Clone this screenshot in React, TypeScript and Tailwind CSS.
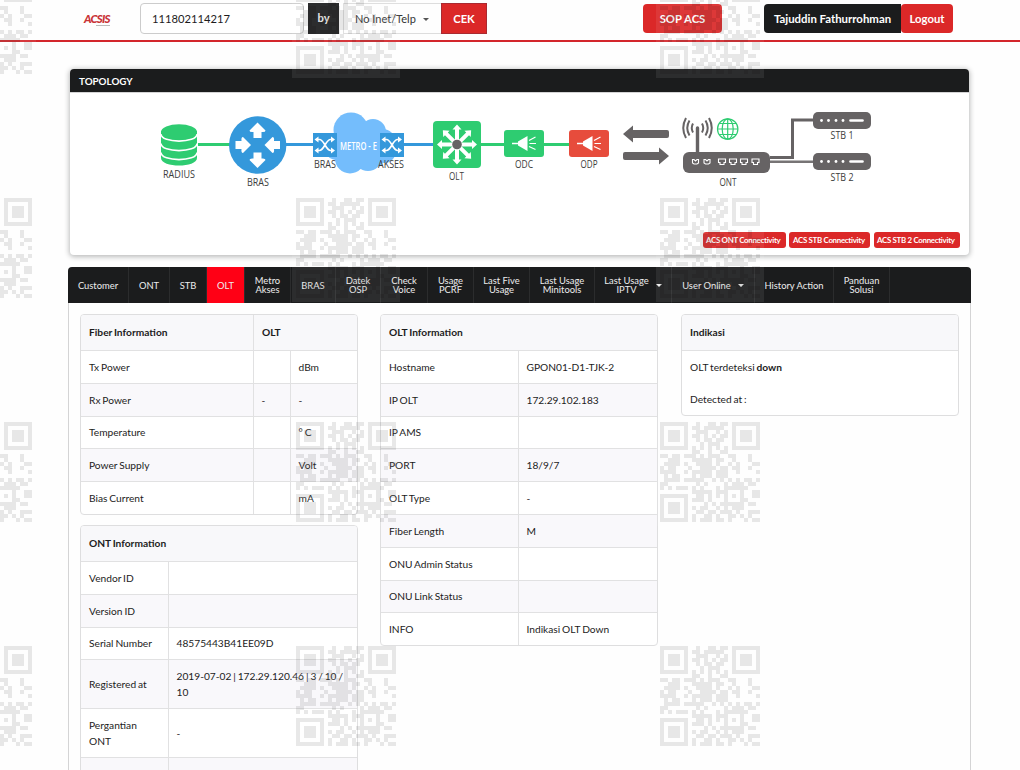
import type { ReactNode } from 'react'

const qrRows = [
  '#######..#..##.##.#######',
  '#.....#.##.#####..#.....#',
  '#.###.#..###..#.#.#.###.#',
  '#.###.#.##.#.#.##.#.###.#',
  '#.###.#..#.##.##..#.###.#',
  '#.....#...#.###...#.....#',
  '#######.#.#.#.#.#.#######',
  '........##..#..##........',
  '##.##.###.#.###..##...#..',
  '..###...#####.##..#...#..',
  '.####.#..####.#..#.#...##',
  '#.##...#..####.##.##..#..',
  '####..#.#####.###..#....#',
  '.#.##...#.###.###........',
  '.####.#####..#.#.#.#.##.#',
  '##.......#.#....#.###.##.',
  '#.#.###.#.#...#.######...',
  '........#####.###...#..##',
  '#######..##.#.#.#.#.#..##',
  '#.....#.###.#...#...##...',
  '#.###.#....#.#.######.##.',
  '#.###.#.#.##..#.#.###....',
  '#.###.#..##.##.###.#..###',
  '#.....#.#..##.#..##.#.#..',
  '#######.#.###.##.#...#.##',
]

const navItems = [
  { label: 'Customer', width: 'w-[61px]' },
  { label: 'ONT', width: 'w-[41px]' },
  { label: 'STB', width: 'w-[37px]' },
  { label: 'OLT', width: 'w-[38px]', active: true },
  { label: 'Metro\nAkses', width: 'w-[46px]' },
  { label: 'BRAS', width: 'w-[45px]' },
  { label: 'Datek\nOSP', width: 'w-[45px]' },
  { label: 'Check\nVoice', width: 'w-[47px]' },
  { label: 'Usage\nPCRF', width: 'w-[46px]' },
  { label: 'Last Five\nUsage', width: 'w-[56px]' },
  { label: 'Last Usage\nMinitools', width: 'w-[65px]' },
  { label: 'Last Usage\nIPTV', width: 'w-[77px]', caret: true },
  { label: 'User Online', width: 'w-[83px]', caret: true },
  { label: 'History Action', width: 'w-[79px]' },
  { label: 'Panduan\nSolusi', width: 'w-[56px]' },
]

const fiberRows = [
  ['Tx Power', '', 'dBm'],
  ['Rx Power', '-', '-'],
  ['Temperature', '', '° C'],
  ['Power Supply', '', 'Volt'],
  ['Bias Current', '', 'mA'],
]

const oltRows = [
  ['Hostname', 'GPON01-D1-TJK-2'],
  ['IP OLT', '172.29.102.183'],
  ['IP AMS', ''],
  ['PORT', '18/9/7'],
  ['OLT Type', '-'],
  ['Fiber Length', 'M'],
  ['ONU Admin Status', ''],
  ['ONU Link Status', ''],
  ['INFO', 'Indikasi OLT Down'],
]

const ontRows = [
  ['Vendor ID', ''],
  ['Version ID', ''],
  ['Serial Number', '48575443B41EE09D'],
  ['Registered at', '2019-07-02 | 172.29.120.46 | 3 / 10 / 10'],
  ['Pergantian ONT', '-'],
  ['', ''],
]

function Watermark() {
  return (
    <svg className="pointer-events-none absolute inset-0" width="1020" height="770" shapeRendering="crispEdges">
      <defs>
        <g id="qr">
          <rect x="-4" y="-4" width="108" height="108" fill="#fff" opacity="0.08" />
          {qrRows.map((row, y) =>
            row.split('').map((c, x) =>
              c === '#' ? <rect key={`${x}-${y}`} x={x * 4} y={y * 4} width="4" height="4" fill="#000" fillOpacity="0.09" /> : null
            )
          )}
        </g>
      </defs>
      {[-26, 198, 422, 646].map((y) =>
        [-68, 296, 660].map((x) => <use key={`${x}-${y}`} href="#qr" x={x} y={y} />)
      )}
    </svg>
  )
}

function Caret({ className = '' }: { className?: string }) {
  return <span className={`h-0 w-0 border-x-[3px] border-t-[3px] border-x-transparent border-t-current ${className}`} />
}

function Label({ x, y, w, children }: { x: number; y: number; w: number; children: string }) {
  return (
    <text x={x - w / 2} y={y} textLength={w} lengthAdjust="spacingAndGlyphs" fontSize="10.500" fill="#3c3c3c">
      {children}
    </text>
  )
}

function Shuffle({ x }: { x: number }) {
  return (
    <g transform={`translate(${x} 133)`}>
      <rect width="24" height="24" fill="#3498db" />
      <path d="M3 6.500h3.500C11 6.500 13 17.500 17.500 17.500h2M3 17.500h3.500C11 17.500 13 6.500 17.500 6.500h2" stroke="#fff" strokeWidth="1.700" fill="none" />
      <path d="M18 3.500l4 3-4 3zM18 14.500l4 3-4 3zM5.500 3.500l-4 3 4 3zM5.500 14.500l-4 3 4 3z" fill="#fff" />
    </g>
  )
}

function Splitter({ x, color }: { x: number; color: string }) {
  return (
    <g transform={`translate(${x} 130)`}>
      <rect width="40" height="27" rx="3" fill={color} />
      <path d="M8 13.500h7" stroke="#fff" strokeWidth="1.500" />
      <path d="M14 11.500L23.500 6v15L14 15.500z" fill="#fff" />
      <path d="M25 10.500l6.500-3.500M25.500 13.500H32M25 16.500l6.500 3" stroke="#fff" strokeWidth="1.200" />
    </g>
  )
}

function SetTopBox({ y }: { y: number }) {
  return (
    <g transform={`translate(813 ${y})`}>
      <rect width="58" height="17" rx="5" fill="#666364" />
      {[8.5, 15.5, 23, 30].map((x) => (
        <circle key={x} cx={x} cy="8.500" r="1.400" fill="#fff" />
      ))}
      <path d="M37.500 8.500h12" stroke="#fff" strokeWidth="2.600" strokeLinecap="round" />
    </g>
  )
}

const bigArrows = [
  'translate(257.5 122.5)',
  'translate(257.5 168) rotate(180)',
  'translate(251 145) rotate(90)',
  'translate(264.5 145) rotate(-90)',
]

function TopologyDiagram() {
  return (
    <svg className="block" width="899" height="138" viewBox="70 93 899 138" fontFamily="'Open Sans', sans-serif">
      <path d="M198 144.500h32M480 144.500h90" stroke="#2ecc71" strokeWidth="3" />
      <path d="M285 144.500h150" stroke="#3498db" strokeWidth="3" />

      {/* Radius database */}
      <path d="M161 131v27c0 10 36 10 36 0v-27z" fill="#2ecc71" />
      <path d="M161 134c0 9.500 36 9.500 36 0M161 143.500c0 9.500 36 9.500 36 0M161 152.500c0 9.500 36 9.500 36 0" stroke="#fff" strokeWidth="1.600" fill="none" />
      <ellipse cx="179" cy="132" rx="18" ry="7.800" fill="#2ecc71" />

      <circle cx="257.700" cy="145" r="28.700" fill="#3498db" />
      {bigArrows.map((t) => (
        <path key={t} transform={t} d="M0 0l8 8q0 2-4 1.500v6h-8v-6q-4 .5-4-1.500z" fill="#fff" />
      ))}

      {/* Metro-E cloud */}
      <g fill="#74bdfc">
        <circle cx="351" cy="130" r="17.500" />
        <circle cx="373" cy="132" r="13" />
        <circle cx="383" cy="141" r="12" />
        <circle cx="337" cy="147" r="13" />
        <circle cx="350" cy="158.500" r="15" />
        <circle cx="368" cy="157" r="14" />
        <circle cx="384" cy="151" r="12" />
        <rect x="340" y="125" width="42" height="40" />
      </g>
      <Shuffle x={313} />
      <Shuffle x={380} />
      <text x="340" y="149.500" textLength="37" lengthAdjust="spacingAndGlyphs" fontSize="11.500" fontWeight="600" fill="#fff">
        METRO - E
      </text>

      <rect x="433" y="121" width="48" height="47" rx="4" fill="#2ecc71" />
      {[0, 45, 90, 135, 180, 225, 270, 315].map((a) => (
        <path key={a} transform={`translate(457 144.5) rotate(${a})`} d="M-2-4v-11h-2.500L0-20l4.500 5H2v11z" fill="#fff" />
      ))}
      <circle cx="457" cy="144.500" r="4.800" fill="#666364" />

      <Splitter x={504} color="#2ecc71" />
      <Splitter x={569} color="#e74c3c" />

      <path d="M623 134l10-8.500v4.500h34q2 0 2 2v4q0 2-2 2h-34v4.500zM669 156l-10-8.500v4.500h-34q-2 0-2 2v4q0 2 2 2h34v4.500z" fill="#666364" />

      {/* ONT with antenna */}
      <path d="M697.500 128v26" stroke="#666364" strokeWidth="3.400" strokeLinecap="round" />
      <path
        d="M693 123.500q-2.500 4.500 0 9M689.500 120.500q-4.500 7.500 0 15M686 118q-5.500 10 0 20M702 123.500q2.500 4.500 0 9M705.500 120.500q4.500 7.500 0 15M709 118q5.500 10 0 20"
        stroke="#666364"
        strokeWidth="2"
        fill="none"
      />
      <g stroke="#2ecc71" strokeWidth="1.200" fill="none">
        <circle cx="727.700" cy="129" r="10.200" />
        <ellipse cx="727.700" cy="129" rx="5.500" ry="10.200" />
        <path d="M727.700 119v20.500M717.500 129h20.500M719 123.500h17.500M719 134.500h17.500" />
      </g>
      <path d="M770 157.500h22.500v-37.500h22" stroke="#666364" strokeWidth="3" fill="none" />
      <path d="M770 161.800h44" stroke="#777475" strokeWidth="2.500" />
      <rect x="683" y="152" width="87" height="21" rx="6" fill="#666364" />
      <g stroke="#fff" strokeWidth="1.100" fill="none">
        {[692.5, 704].map((x) => (
          <path key={x} d={`M${x} 159.500h1.500l1.500 1.500 1.500-1.500h1.500v3.500l-1.500 1h-3l-1.500-1z`} />
        ))}
        {[718.5, 729.5, 740.5, 752].map((x) => (
          <path key={x} d={`M${x} 159h7v3.500h-1.500v2h-4v-2h-1.500z`} />
        ))}
      </g>
      <SetTopBox y={112} />
      <SetTopBox y={153} />

      <Label x={179} y={178} w={32}>RADIUS</Label>
      <Label x={258} y={186} w={22}>BRAS</Label>
      <Label x={325} y={168} w={22}>BRAS</Label>
      <Label x={391} y={168} w={26}>AKSES</Label>
      <Label x={456.5} y={180} w={15}>OLT</Label>
      <Label x={524} y={168} w={18}>ODC</Label>
      <Label x={589} y={168} w={17}>ODP</Label>
      <Label x={728} y={186} w={17}>ONT</Label>
      <Label x={842} y={139} w={23}>STB 1</Label>
      <Label x={842} y={181} w={23}>STB 2</Label>
    </svg>
  )
}

function Panel({ children }: { children: ReactNode }) {
  return <div className="w-[278px] overflow-hidden rounded border border-[#dededf] bg-white">{children}</div>
}

function PanelTitle({ children }: { children: ReactNode }) {
  return <div className="flex h-[35px] bg-[#f8f8fa] font-bold leading-[35px]">{children}</div>
}

function Row({ index, cells, widths, tall }: { index: number; cells: string[]; widths: string[]; tall?: boolean }) {
  return (
    <div className={`flex border-t border-[#e1e1e2] ${tall ? 'h-[48.800px]' : 'h-[32.800px]'} ${index % 2 ? 'bg-[#f9f8fb]' : ''}`}>
      {cells.map((cell, i) => (
        <div key={i} className={`flex items-center px-2 leading-4 ${i > 0 ? 'border-l border-[#e1e1e2] pl-[7.500px]' : ''} ${widths[i]}`}>
          {cell}
        </div>
      ))}
    </div>
  )
}

export default function App() {
  return (
    <div className="relative h-[770px] w-[1020px] overflow-hidden bg-[#fefefe] font-['Lato',sans-serif] text-[10.200px] text-[#1c1c1c]">
      <header className="flex h-[42px] items-start border-b-2 border-[#d3262c] text-[11.200px]">
        <div className="ml-[84px] mt-[12px] w-14 text-[11.500px] font-black italic leading-[13px] tracking-[-0.8px] text-[#c93438]">
          <span className="inline-block">
            ACSIS
            <span className="ml-3 block h-px bg-[#bbb]" />
          </span>
        </div>
        <div className="mt-[3px] flex h-[31px] w-[164px] items-center rounded border border-[#ccc] bg-white px-[11px] pt-px">111802114217</div>
        <div className="ml-1 mt-[3px] flex h-[31px] w-[31px] items-center justify-center bg-[#1b1c1d] font-bold text-[#e5e5e5]">by</div>
        <div className="ml-[4px] mt-[3px] flex h-[31px] w-[98px] items-center border border-r-0 border-[#ddd] pl-[11px] pt-[2px] text-[11px] text-[#333]">
          No Inet/Telp
          <Caret className="ml-[7px] text-[#555]" />
        </div>
        <button className="mt-[3px] h-[31px] w-[46px] border border-[#a92a31] bg-[#db2828] pt-[2px] font-bold text-white">CEK</button>
        <button className="ml-[156px] mt-[4px] h-[29px] w-[79px] rounded bg-[#db2828] pt-[2px] text-[11.300px] font-bold text-white">SOP ACS</button>
        <div className="ml-[42px] mt-[4px] flex h-[29px] w-[137px] items-center justify-center rounded-l bg-[#1b1c1d] text-[11.400px] font-bold text-white">
          Tajuddin Fathurrohman
        </div>
        <button className="mt-[4px] h-[29px] w-[52px] rounded bg-[#db2828] pt-[2px] text-[11.300px] font-bold text-white">Logout</button>
      </header>

      <section className="ml-[70px] mt-[27px] h-[186px] w-[899px] rounded bg-white shadow-[0_1px_5px_1px_rgba(34,36,38,0.3)]">
        <h2 className="h-6 rounded-t border-b border-[#d4d4d5] bg-[#1b1c1d] pl-[9px] text-[9.800px] font-bold leading-6 text-white">TOPOLOGY</h2>
        <TopologyDiagram />
        <div className="flex gap-[3px] whitespace-nowrap pl-[633px] pt-px text-[7.900px] font-bold tracking-[-0.3px] text-white">
          <span className="h-4 w-[83px] rounded-[3px] bg-[#db2828] pl-[3px] leading-4">ACS ONT Connectivity</span>
          <span className="h-4 w-[81px] rounded-[3px] bg-[#db2828] pl-1 leading-4">ACS STB Connectivity</span>
          <span className="ml-px h-4 w-[86px] rounded-[3px] bg-[#db2828] pl-[3px] leading-4">ACS STB 2 Connectivity</span>
        </div>
      </section>

      <nav className="ml-[68px] mt-3 flex h-9 w-[903px] rounded-t bg-[#1b1c1d] text-[9.400px] leading-[9px] text-[#ededed]">
        {navItems.map((item) => (
          <a
            key={item.label}
            className={`flex items-center justify-center whitespace-pre border-r border-[#2b2c2d] text-center ${item.width} ${item.active ? 'bg-[#ff0015]' : ''}`}
          >
            {item.label}
            {item.caret && <Caret className="ml-[7px]" />}
          </a>
        ))}
      </nav>

      <main className="ml-[68px] flex h-[480px] w-[903px] items-start border-x border-[#d4d4d5] pl-[11px] pt-[11px] [word-spacing:-0.7px]">
        <div className="flex flex-col gap-[10px]">
          <Panel>
            <PanelTitle>
              <span className="w-[172px] pl-2">Fiber Information</span>
              <span className="border-l border-[#e1e1e2] pl-2">OLT</span>
            </PanelTitle>
            {fiberRows.map((cells, i) => (
              <Row key={cells[0]} index={i} cells={cells} widths={['w-[172px]', 'w-[37px]', 'flex-1']} />
            ))}
          </Panel>
          <Panel>
            <PanelTitle>
              <span className="pl-2">ONT Information</span>
            </PanelTitle>
            {ontRows.map((cells, i) => (
              <Row key={cells[0]} index={i} cells={cells} widths={['w-[87px]', 'flex-1 pr-3']} tall={i === 3 || i === 4} />
            ))}
          </Panel>
        </div>

        <div className="ml-[22px]">
          <Panel>
            <PanelTitle>
              <span className="pl-2">OLT Information</span>
            </PanelTitle>
            {oltRows.map((cells, i) => (
              <Row key={cells[0]} index={i} cells={cells} widths={['w-[137px]', 'flex-1']} />
            ))}
          </Panel>
        </div>

        <div className="ml-[23px]">
          <Panel>
            <PanelTitle>
              <span className="pl-2">Indikasi</span>
            </PanelTitle>
            <div className="h-[65px] border-t border-[#e1e1e2] px-2 pt-2 leading-4">
              <p>
                OLT terdeteksi <b>down</b>
              </p>
              <p className="mt-4">Detected at :</p>
            </div>
          </Panel>
        </div>
      </main>

      <Watermark />
    </div>
  )
}
